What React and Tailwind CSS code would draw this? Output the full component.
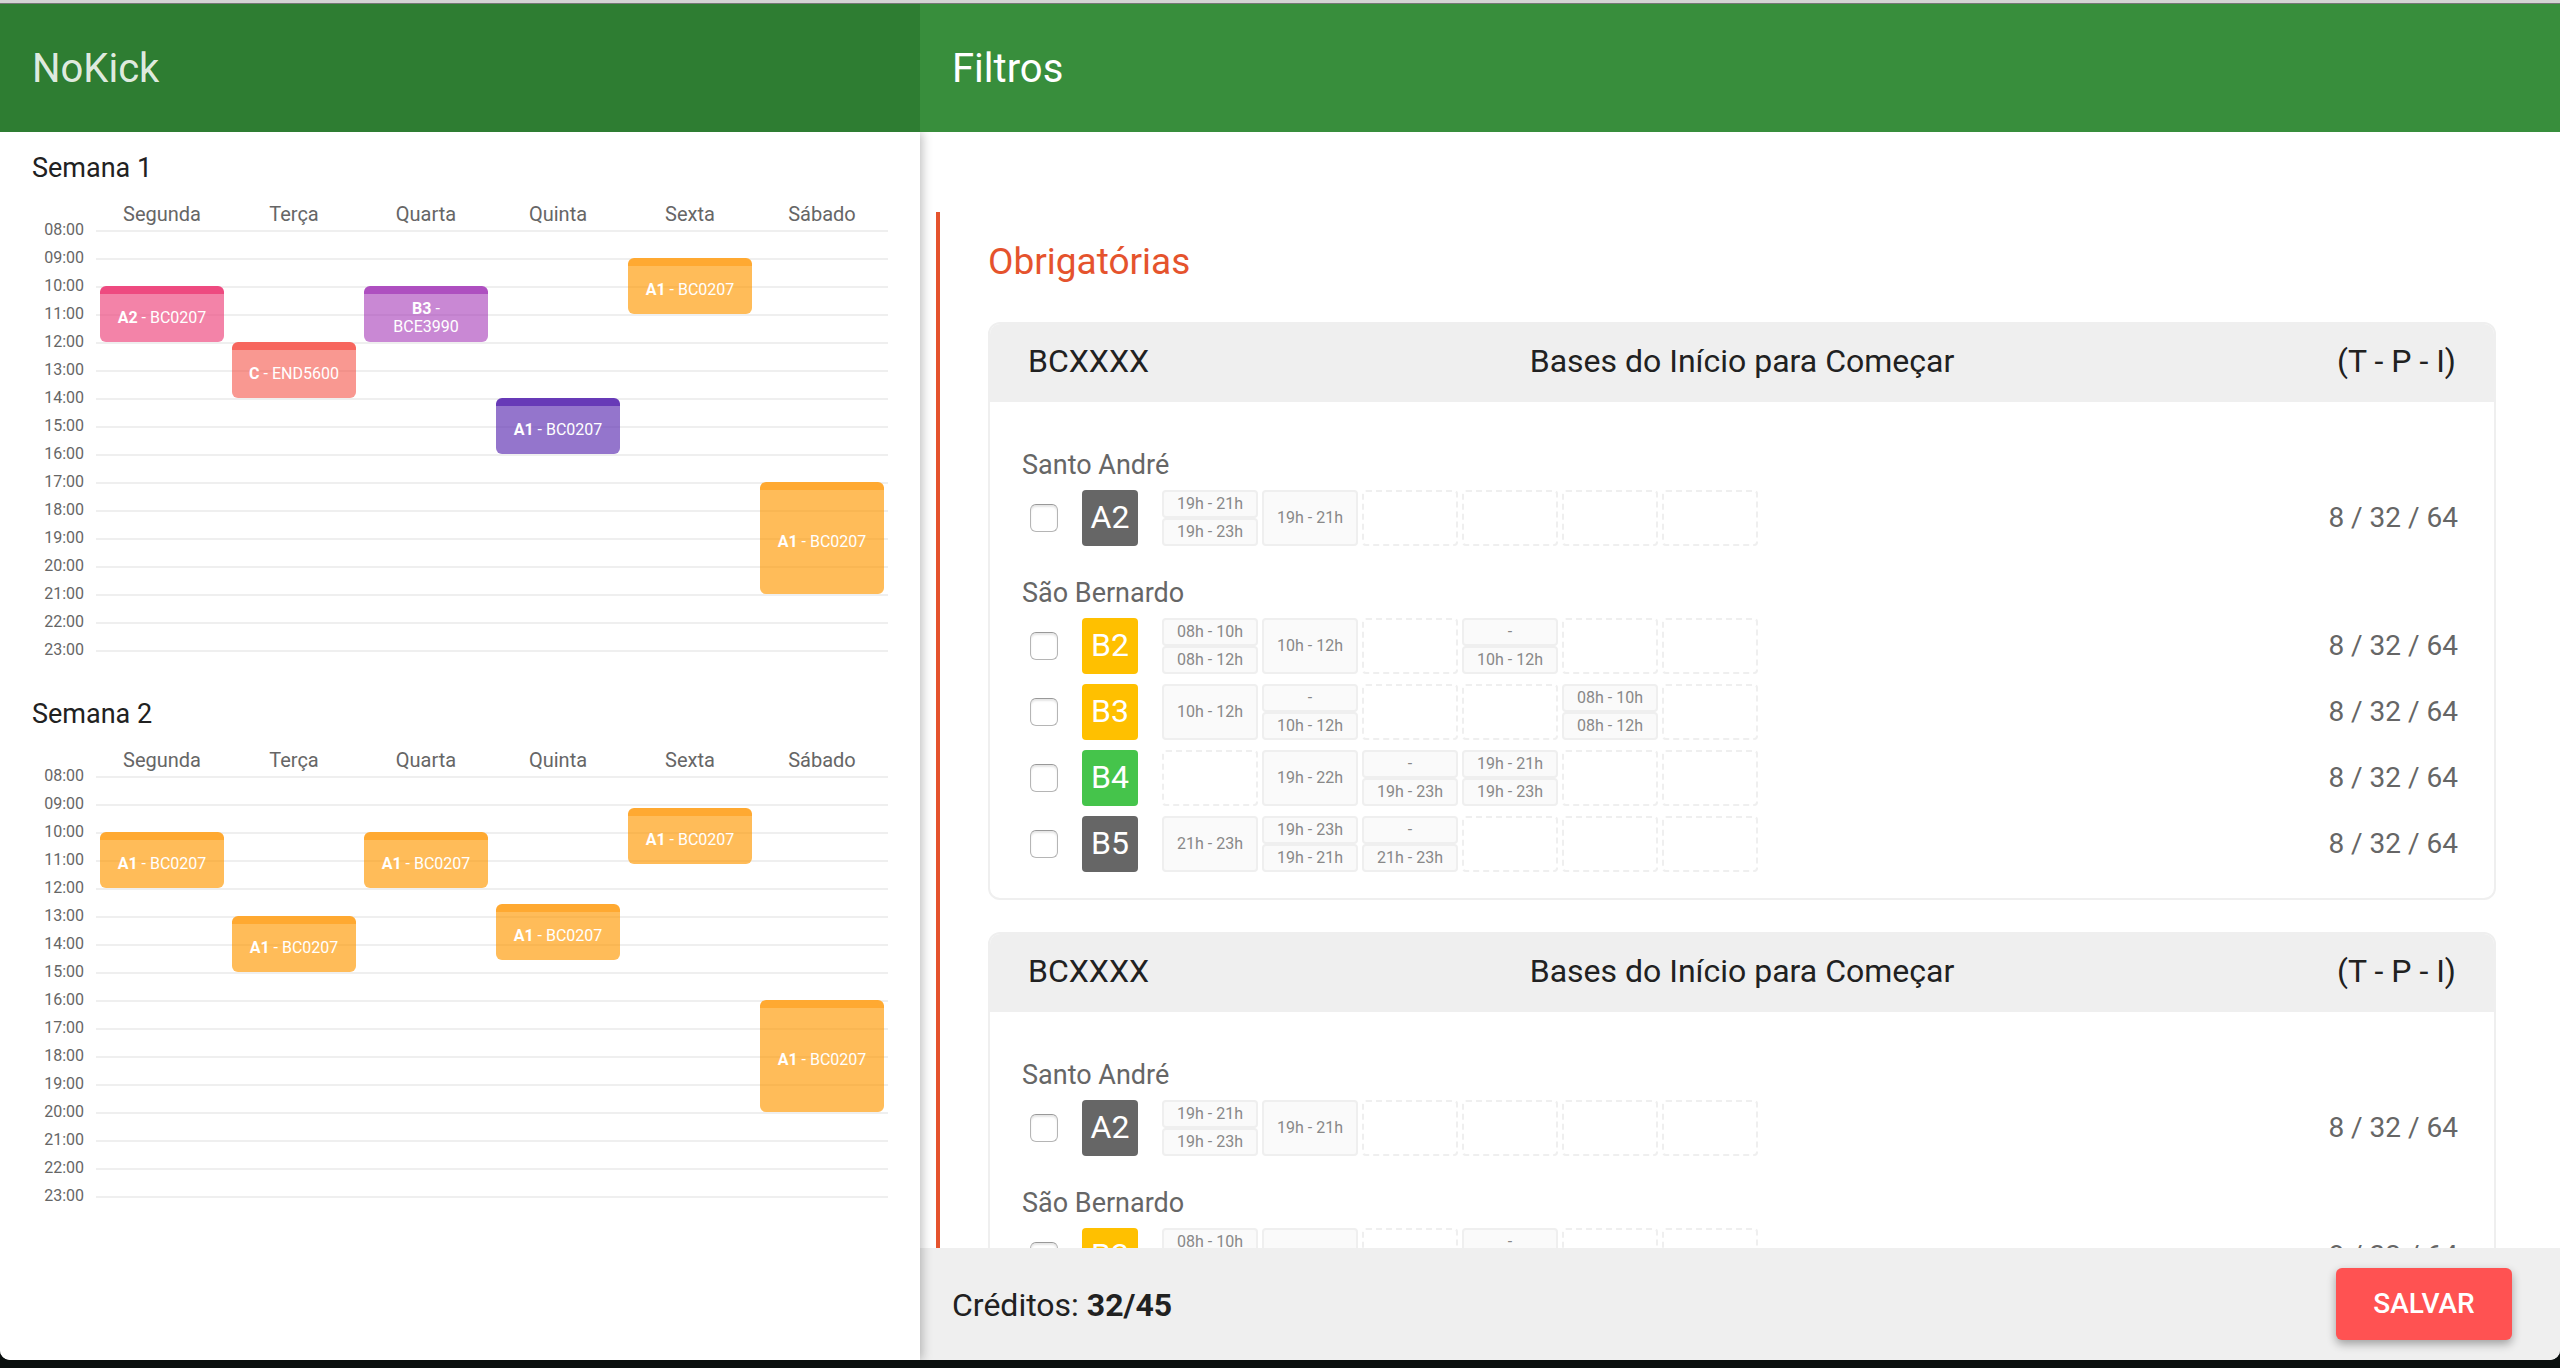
const DAYS = ['Segunda', 'Terça', 'Quarta', 'Quinta', 'Sexta', 'Sábado'];
const START = 8;
const HOUR = 28;
const HOURS = Array.from({ length: 16 }, (_, i) => `${String(START + i).padStart(2, '0')}:00`);

const TONES = {
  pink: 'border-[#ee4a80] bg-[#ec407a]/65',
  red: 'border-[#f7665e] bg-[#f44336]/55',
  purple: 'border-[#ae4fc0] bg-[#9c27b0]/55',
  violet: 'border-[#673ab7] bg-[#673ab7]/70',
  orange: 'border-[#ffa931] bg-[#ff9800]/65',
};

const WEEKS = [
  {
    title: 'Semana 1',
    events: [
      { day: 0, from: 10, to: 12, group: 'A2', code: 'BC0207', tone: 'pink' },
      { day: 1, from: 12, to: 14, group: 'C', code: 'END5600', tone: 'red' },
      { day: 2, from: 10, to: 12, group: 'B3', code: 'BCE3990', tone: 'purple' },
      { day: 3, from: 14, to: 16, group: 'A1', code: 'BC0207', tone: 'violet' },
      { day: 4, from: 9, to: 11, group: 'A1', code: 'BC0207', tone: 'orange' },
      { day: 5, from: 17, to: 21, group: 'A1', code: 'BC0207', tone: 'orange' },
    ],
  },
  {
    title: 'Semana 2',
    events: [
      { day: 0, from: 10, to: 12, group: 'A1', code: 'BC0207', tone: 'orange' },
      { day: 1, from: 13, to: 15, group: 'A1', code: 'BC0207', tone: 'orange' },
      { day: 2, from: 10, to: 12, group: 'A1', code: 'BC0207', tone: 'orange' },
      { day: 3, from: 12.571, to: 14.571, group: 'A1', code: 'BC0207', tone: 'orange' },
      { day: 4, from: 9.143, to: 11.143, group: 'A1', code: 'BC0207', tone: 'orange' },
      { day: 5, from: 16, to: 20, group: 'A1', code: 'BC0207', tone: 'orange' },
    ],
  },
];

const BADGES = { gray: 'bg-[#666]', amber: 'bg-[#ffc000]', green: 'bg-[#45c44b]' };

const CAMPUSES = [
  {
    name: 'Santo André',
    rows: [{ group: 'A2', badge: 'gray', slots: [['19h - 21h', '19h - 23h'], ['19h - 21h'], [], [], [], []] }],
  },
  {
    name: 'São Bernardo',
    rows: [
      { group: 'B2', badge: 'amber', slots: [['08h - 10h', '08h - 12h'], ['10h - 12h'], [], ['-', '10h - 12h'], [], []] },
      { group: 'B3', badge: 'amber', slots: [['10h - 12h'], ['-', '10h - 12h'], [], [], ['08h - 10h', '08h - 12h'], []] },
      { group: 'B4', badge: 'green', slots: [[], ['19h - 22h'], ['-', '19h - 23h'], ['19h - 21h', '19h - 23h'], [], []] },
      { group: 'B5', badge: 'gray', slots: [['21h - 23h'], ['19h - 23h', '19h - 21h'], ['-', '21h - 23h'], [], [], []] },
    ],
  },
];

function Event({ event }) {
  return (
    <div
      className={`absolute inset-x-1 flex items-center justify-center rounded-md border-t-8 px-4 text-center text-base leading-[18px] text-white ${TONES[event.tone]}`}
      style={{ top: Math.round((event.from - START) * HOUR), height: Math.round((event.to - event.from) * HOUR) }}
    >
      <p>
        <b className="font-bold">{event.group}</b> - {event.code}
      </p>
    </div>
  );
}

function Week({ week }) {
  return (
    <section>
      <h2 className="text-[27px] leading-8 text-[#212121]">{week.title}</h2>
      <div className="mt-4 ml-16 grid grid-cols-6 text-center text-xl leading-7 text-[#666]">
        {DAYS.map((day) => (
          <h3 key={day}>{day}</h3>
        ))}
      </div>
      <div className="mt-0.5 flex">
        <ol className="-mt-3.5 w-16 pr-3 text-right text-base leading-7 text-[#666]">
          {HOURS.map((hour) => (
            <li key={hour}>{hour}</li>
          ))}
        </ol>
        <div className="relative flex-1">
          {HOURS.map((hour) => (
            <div key={hour} className="h-7 border-t-2 border-[#efefef]" />
          ))}
          <div className="absolute inset-0 grid grid-cols-6">
            {DAYS.map((day, i) => (
              <div key={day} className="relative">
                {week.events.filter((e) => e.day === i).map((e) => (
                  <Event key={e.from} event={e} />
                ))}
              </div>
            ))}
          </div>
        </div>
      </div>
    </section>
  );
}

function Slot({ times }) {
  if (times.length === 0) return <div className="rounded border-2 border-dashed border-[#efefef]" />;
  return (
    <div className="flex flex-col">
      {times.map((time) => (
        <div
          key={time}
          className="flex flex-1 items-center justify-center rounded border-2 border-[#efefef] bg-[#fafafa] text-base leading-5 text-[#888]"
        >
          {time}
        </div>
      ))}
    </div>
  );
}

function Course({ id }) {
  return (
    <article className="overflow-hidden rounded-xl border-2 border-[#efefef]">
      <header className="-mt-0.5 grid h-20 grid-cols-[1fr_auto_1fr] items-center bg-[#efefef] px-[38px] pb-0.5 text-[32px] leading-10 text-[#212121]">
        <span>BCXXXX</span>
        <h3>Bases do Início para Começar</h3>
        <span className="text-right">(T - P - I)</span>
      </header>
      <div className="flex flex-col gap-[29px] px-8 pt-[45px] pb-[26px] text-[#666]">
        {CAMPUSES.map((campus) => (
          <section key={campus.name}>
            <h4 className="text-[27px] leading-9">{campus.name}</h4>
            <ul className="mt-[7px] flex flex-col gap-2.5">
              {campus.rows.map((row) => (
                <li key={row.group} className="flex h-14 items-center">
                  <input
                    id={`${id}-${row.group}`}
                    type="checkbox"
                    className="ml-2 size-7 appearance-none rounded-md border border-[#b5b5b5] border-t-[#999] bg-white shadow-[inset_0_2px_2px_#0000001a]"
                  />
                  <label
                    htmlFor={`${id}-${row.group}`}
                    className={`ml-6 flex size-14 items-center justify-center rounded pb-0.5 text-[32px] leading-10 text-white ${BADGES[row.badge]}`}
                  >
                    {row.group}
                  </label>
                  <div className="ml-6 grid h-14 grid-cols-[repeat(6,96px)] gap-1">
                    {row.slots.map((times, i) => (
                      <Slot key={i} times={times} />
                    ))}
                  </div>
                  <span className="ml-auto pr-1 text-[28px] leading-9">8 / 32 / 64</span>
                </li>
              ))}
            </ul>
          </section>
        ))}
      </div>
    </article>
  );
}

export default function App() {
  return (
    <div className="flex h-screen flex-col bg-[#0a0f0e] pb-2 font-['Roboto',sans-serif]">
      <div className="flex min-h-0 flex-1 flex-col overflow-hidden rounded-b-[10px] bg-white">
        <div className="h-1 shrink-0 border-b border-[#777] bg-[#d4d4d4]" />
        <div className="relative z-20 grid h-32 shrink-0 grid-cols-[23fr_41fr] items-stretch text-[40px] leading-[48px]">
          <header className="flex items-center bg-[#2e7d32] px-8 pt-0.5 text-white/87">
            <h1>NoKick</h1>
          </header>
          <header className="flex items-center bg-[#388e3c] px-8 pt-0.5 text-white">
            <h1>Filtros</h1>
          </header>
        </div>
        <div className="grid min-h-0 flex-1 grid-cols-[23fr_41fr]">
          <aside className="relative z-10 flex flex-col gap-5 bg-white px-8 pt-5 shadow-[2px_0_10px_#00000044]">
            {WEEKS.map((week) => (
              <Week key={week.title} week={week} />
            ))}
          </aside>
          <main className="flex min-h-0 flex-col">
            <div className="min-h-0 flex-1 overflow-y-auto pt-20 pr-16 pl-4 [scrollbar-width:none]">
              <section className="border-l-4 border-[#e5532d] pt-6 pl-12">
                <h2 className="text-[37px] leading-[52px] text-[#e5532d]">Obrigatórias</h2>
                <div className="mt-[34px] flex flex-col gap-8 pb-8">
                  <Course id="course-1" />
                  <Course id="course-2" />
                </div>
              </section>
            </div>
            <footer className="flex h-28 shrink-0 items-center justify-between bg-[#efefef] pr-12 pl-8">
              <p className="pt-0.5 text-[32px] leading-10 text-[#212121]">
                Créditos: <b className="font-bold">32/45</b>
              </p>
              <button
                type="button"
                className="h-[72px] w-44 rounded-md bg-[#ff5252] text-[28px] leading-9 font-medium text-white shadow-[0_4px_10px_#00000055]"
              >
                SALVAR
              </button>
            </footer>
          </main>
        </div>
      </div>
    </div>
  );
}
